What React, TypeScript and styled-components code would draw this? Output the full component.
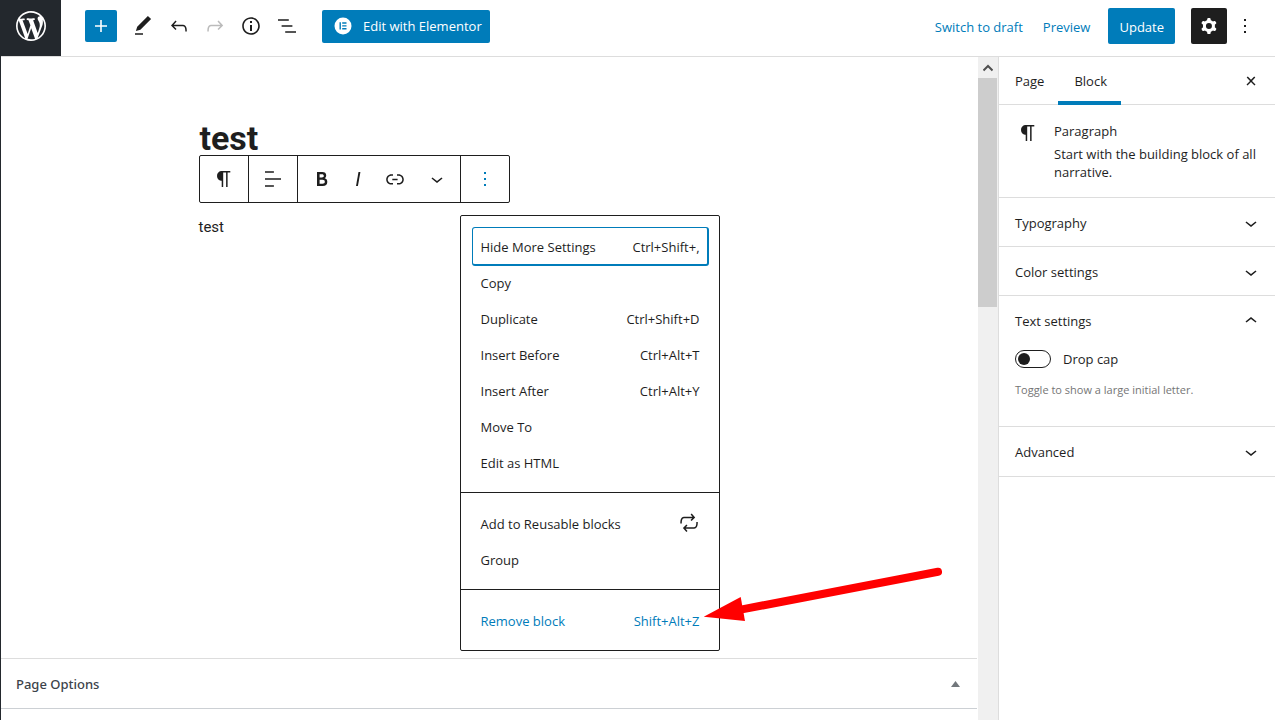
import React from "react";
import styled, { createGlobalStyle, css } from "styled-components";

const blue = "#007cba";
const ink = "#1e1e1e";
const line = "#ddd";

const GlobalStyle = createGlobalStyle`
  *, *::before, *::after { box-sizing: border-box; }
  body {
    margin: 0;
    background: #fff;
    color: ${ink};
    font: 13px/18px "Open Sans", "Noto Sans", sans-serif;
  }
  button, input { margin: 0; font: inherit; color: inherit; }
  h1, h2, h3, p, ul { margin: 0; padding: 0; }
`;

const paths = {
  plus: "M18 11.2h-5.2V6h-1.6v5.2H6v1.6h5.2V18h1.6v-5.2H18z",
  pencil: "M20.1 5.1L16.9 2 6.2 12.7l-1.3 4.4 4.5-1.3L20.1 5.1zM4 20.8h8v-1.5H4v1.5z",
  undo: "M18.3 11.7c-.6-.6-1.4-.9-2.3-.9H6.7l2.9-3.3-1.1-1-4.5 5L8.5 16l1-1-2.7-2.7H16c.5 0 .9.2 1.3.5 1 1 1 3.4 1 4.5v.3h1.5v-.2c0-1.5 0-4.3-1.5-5.7z",
  redo: "M15.6 6.5l-1.1 1 2.9 3.3H8c-.9 0-1.7.3-2.3.9-1.4 1.5-1.4 4.2-1.4 5.6v.2h1.5v-.3c0-1.1 0-3.5 1-4.5.3-.3.7-.5 1.3-.5h9.2L14.5 15l1.1 1.1 4.6-4.6-4.6-5z",
  info: "M12 3.2c-4.8 0-8.8 3.9-8.8 8.8 0 4.8 3.9 8.8 8.8 8.8 4.8 0 8.8-3.9 8.8-8.8 0-4.8-4-8.8-8.8-8.8zm0 16c-4 0-7.2-3.3-7.2-7.2C4.8 8 8 4.8 12 4.8s7.2 3.3 7.2 7.2c0 4-3.2 7.2-7.2 7.2zM11 17h2v-6h-2v6zm0-8h2V7h-2v2z",
  list: "M13.8 5.2H3v1.5h10.8V5.2zm-3.6 12v1.5H21v-1.5H10.2zm7.2-6H6.6v1.5h10.8v-1.5z",
  cog: "M10.289 4.836A1 1 0 0111.275 4h1.306a1 1 0 01.987.836l.244 1.466c.787.26 1.503.679 2.108 1.218l1.393-.522a1 1 0 011.216.437l.653 1.13a1 1 0 01-.23 1.273l-1.148.944a6.025 6.025 0 010 2.435l1.149.946a1 1 0 01.23 1.272l-.653 1.13a1 1 0 01-1.216.437l-1.394-.522c-.605.54-1.32.958-2.108 1.218l-.244 1.466a1 1 0 01-.987.836h-1.306a1 1 0 01-.986-.836l-.244-1.466a5.995 5.995 0 01-2.108-1.218l-1.394.522a1 1 0 01-1.217-.436l-.653-1.131a1 1 0 01.23-1.272l1.149-.946a6.026 6.026 0 010-2.435l-1.148-.944a1 1 0 01-.23-1.272l.653-1.131a1 1 0 011.217-.437l1.393.522a5.994 5.994 0 012.108-1.218l.244-1.466zM14.929 12a3 3 0 11-6 0 3 3 0 016 0z",
  dots: "M13 19h-2v-2h2v2zm0-6h-2v-2h2v2zm0-6h-2V5h2v2z",
  close: "M13 11.9l3.3-3.4-1.1-1-3.2 3.3-3.2-3.3-1.1 1 3.3 3.4-3.5 3.6 1 1L12 13l3.5 3.5 1-1z",
  paragraph: "M18.3 4H9.9v-.1l-.9.2c-2.3.4-4 2.4-4 4.8s1.7 4.4 4 4.8l.7.1V20h1.5V5.5h2.9V20h1.5V5.5h2.7V4z",
  align: "M4 19.8h8.9v-1.5H4v1.5zm8.9-15.6H4v1.5h8.9V4.2zm-8.9 7v1.5h16v-1.5H4z",
  bold: "M14.7 11.3c1-.6 1.5-1.6 1.5-3 0-2.3-1.3-3.4-4-3.4H7v14h5.8c1.4 0 2.5-.3 3.3-1 .8-.7 1.2-1.7 1.2-2.9.1-1.9-.8-3.1-2.6-3.7zm-5.1-4h2.3c.6 0 1.1.1 1.4.4.3.3.5.7.5 1.2s-.2 1-.5 1.2c-.3.3-.8.4-1.4.4H9.6V7.3zm4.6 9c-.4.3-1 .4-1.7.4H9.6v-3.9h2.9c.7 0 1.3.2 1.7.5.4.3.6.8.6 1.5s-.2 1.2-.6 1.5z",
  italic: "M12.5 5L10 19h1.9l2.5-14z",
  link: "M15.6 7.2H14v1.5h1.6c2 0 3.7 1.7 3.7 3.7s-1.7 3.7-3.7 3.7H14v1.5h1.6c2.8 0 5.2-2.3 5.2-5.2 0-2.9-2.3-5.2-5.2-5.2zM4.7 12.4c0-2 1.7-3.7 3.7-3.7H10V7.2H8.4c-2.9 0-5.2 2.3-5.2 5.2 0 2.9 2.3 5.2 5.2 5.2H10v-1.5H8.4c-2 0-3.7-1.7-3.7-3.7zm4.6.9h5.3v-1.5H9.3v1.5z",
  down: "M17.5 11.6L12 16l-5.5-4.4.9-1.2L12 14l4.5-3.6 1 1.2z",
  up: "M6.5 12.4L12 8l5.5 4.4-.9 1.2L12 10l-4.5 3.6-1-1.2z",
  repeat: "M7 7.2h8.2L13.5 9l1.1 1.1 3.6-3.6-3.5-4-1.1 1 1.9 2.3H7c-.9 0-1.7.3-2.3.9-1.4 1.5-1.4 4.2-1.4 5.6v.2h1.5v-.3c0-1.1 0-3.5 1-4.5.3-.3.7-.5 1.2-.5zm13.8 4V11h-1.5v.3c0 1.1 0 3.5-1 4.5-.3.3-.7.5-1.3.5H8.8l1.7-1.7-1.1-1.1L5.9 17l3.5 4 1.1-1-1.9-2.3H17c.9 0 1.7-.3 2.3-.9 1.5-1.4 1.5-4.2 1.5-5.6z",
  wordpress: "M20 10c0-5.51-4.49-10-10-10C4.48 0 0 4.49 0 10c0 5.52 4.48 10 10 10 5.51 0 10-4.48 10-10zM7.78 15.37L4.37 6.22c.55-.02 1.17-.08 1.17-.08.5-.06.44-1.13-.06-1.11 0 0-1.45.11-2.37.11-.18 0-.37 0-.58-.01C4.12 2.69 6.87 1.11 10 1.11c2.33 0 4.45.87 6.05 2.34-.68-.11-1.65.39-1.65 1.58 0 .74.45 1.36.9 2.1.35.61.55 1.36.55 2.46 0 1.49-1.4 5-1.4 5l-3.03-8.37c.54-.02.82-.17.82-.17.5-.05.44-1.25-.06-1.22 0 0-1.44.12-2.38.12-.87 0-2.33-.12-2.33-.12-.5-.03-.56 1.2-.06 1.22l.92.08 1.26 3.41zM17.41 10c.24-.64.74-1.87.43-4.25.7 1.29 1.05 2.71 1.05 4.25 0 3.29-1.73 6.24-4.4 7.78.97-2.59 1.94-5.2 2.92-7.78zM6.1 18.09C3.12 16.65 1.11 13.53 1.11 10c0-1.3.23-2.48.72-3.59C3.25 10.3 4.67 14.2 6.1 18.09zm4.03-6.63l2.58 6.98c-.86.29-1.76.45-2.71.45-.79 0-1.57-.11-2.29-.33.81-2.38 1.62-4.74 2.42-7.1z",
};

const Svg = styled.svg`
  display: block;
  flex: none;
  fill: currentColor;
`;

const Icon = ({ name, size = 24, viewBox = "0 0 24 24" }: { name: keyof typeof paths; size?: number; viewBox?: string }) => (
  <Svg width={size} height={size} viewBox={viewBox} aria-hidden="true">
    <path fillRule={name === "cog" ? "evenodd" : undefined} d={paths[name]} />
  </Svg>
);

const Page = styled.div`
  display: flex;
  flex-direction: column;
  min-height: 100vh;
  border-left: 1px solid #23282d;
`;

const Header = styled.header`
  display: flex;
  align-items: center;
  height: 57px;
  border-bottom: 1px solid ${line};
`;

const HomeLink = styled.a`
  display: flex;
  align-items: center;
  justify-content: center;
  align-self: stretch;
  width: 60px;
  padding-bottom: 4px;
  background: #23282d;
  color: #fff;
`;

const HeaderTools = styled.div`
  display: flex;
  align-items: center;
  flex: 1;
  height: 52px;
  align-self: flex-start;
  padding-left: 24px;
`;

const HeaderActions = styled.div`
  display: flex;
  align-items: center;
  height: 52px;
  align-self: flex-start;
  padding-right: 12px;
`;

const IconButton = styled.button<{ $tone?: "primary" | "dark" | "muted" | "accent"; $width?: number; $height?: number }>`
  display: flex;
  align-items: center;
  justify-content: center;
  flex: none;
  width: ${(p) => p.$width ?? 36}px;
  height: ${(p) => p.$height ?? 36}px;
  padding: 0;
  border: 0;
  border-radius: 2px;
  background: none;
  ${(p) => p.$tone === "primary" && css`background: ${blue}; color: #fff;`}
  ${(p) => p.$tone === "dark" && css`background: ${ink}; color: #fff;`}
  ${(p) => p.$tone === "muted" && css`color: #bbb;`}
  ${(p) => p.$tone === "accent" && css`color: ${blue};`}
`;

const ToolGroup = styled.div`
  display: flex;
  margin: 0 17px 0 8px;
`;

const PrimaryButton = styled.button<{ $withIcon?: boolean }>`
  display: flex;
  align-items: center;
  gap: 11px;
  height: ${(p) => (p.$withIcon ? 33 : 36)}px;
  padding: ${(p) => (p.$withIcon ? "0 8px 0 12px" : "2px 11px 0")};
  border: 0;
  border-radius: 2px;
  background: ${blue};
  color: #fff;
  white-space: nowrap;
`;

const TextButton = styled.button`
  height: 36px;
  padding: 2px 10px 0;
  border: 0;
  background: none;
  color: ${blue};
  white-space: nowrap;
`;

const ActionGap = styled.div`
  display: flex;
  align-items: center;
  gap: 16px;
  margin-left: 8px;
`;

const Body = styled.div`
  display: flex;
  flex: 1;
`;

const Main = styled.main`
  display: flex;
  flex-direction: column;
  flex: 1;
  min-width: 0;
`;

const Canvas = styled.div`
  flex: 1;
  padding: 60px 24px 0;
`;

const Column = styled.div`
  max-width: 581px;
  margin: 0 auto;
  font-family: Roboto, sans-serif;
`;

const Title = styled.h1`
  height: 38px;
  padding-left: 1px;
  font-size: 34px;
  line-height: 42px;
  font-weight: 700;
`;

const ToolbarAnchor = styled.div`
  position: relative;
  width: max-content;
  font-family: "Open Sans", "Noto Sans", sans-serif;
`;

const BlockToolbar = styled.div`
  display: flex;
  height: 48px;
  border: 1px solid ${ink};
  border-radius: 2px;
  background: #fff;
`;

const ToolbarSection = styled.div<{ $pad?: boolean }>`
  display: flex;
  align-items: center;
  padding-left: ${(p) => (p.$pad ? 6 : 0)}px;
  & + & { border-left: 1px solid ${ink}; }
`;

const Paragraph = styled.p`
  padding-top: 12px;
  font-size: 15px;
  line-height: 24px;
`;

const Menu = styled.div`
  position: absolute;
  z-index: 2;
  top: 60px;
  left: 261px;
  width: 260px;
  border: 1px solid ${ink};
  border-radius: 2px;
  background: #fff;
`;

const MenuGroup = styled.div`
  padding: 13px 10px 11px 11px;
  & + & { border-top: 1px solid ${ink}; }
`;

const MenuItem = styled.button<{ $focused?: boolean; $accent?: boolean }>`
  position: relative;
  display: flex;
  align-items: center;
  justify-content: space-between;
  width: 100%;
  height: 36px;
  padding: 0 9px;
  border: 0;
  background: none;
  color: ${(p) => (p.$accent ? blue : ink)};
  text-align: left;
  ${(p) => p.$focused && css`
    &::after {
      content: "";
      position: absolute;
      inset: -2px 0 -1px;
      border: solid ${blue};
      border-width: 1px 2px 2px 1px;
      border-radius: 3px;
    }
  `}
`;

const MenuIcon = styled.span`
  margin-right: -1px;
  padding-bottom: 2px;
`;

const Arrow = styled.svg`
  position: absolute;
  z-index: 3;
  top: 344px;
  left: 239px;
  fill: #f00;
  stroke: #f00;
  pointer-events: none;
`;

const MetaBoxes = styled.section`
  border-top: 1px solid ${line};
  padding-bottom: 11px;
`;

const MetaHeader = styled.button`
  display: flex;
  align-items: center;
  justify-content: space-between;
  width: 100%;
  height: 50px;
  padding: 0 17px 0 15px;
  border: 0;
  border-bottom: 1px solid #ccd0d4;
  background: none;
  color: #3c434a;
  font-family: "Noto Sans", sans-serif;
  font-weight: 500;
`;

const Scrollbar = styled.div`
  width: 20px;
  padding-right: 1px;
  margin-left: 1px;
  background: #f0f0f0;
`;

const ScrollArrow = styled.div`
  display: flex;
  align-items: center;
  justify-content: center;
  height: 21px;
  color: #505050;
`;

const ScrollThumb = styled.div`
  height: 229px;
  background: #cdcdcd;
`;

const Sidebar = styled.aside`
  flex: none;
  width: 277px;
  border-left: 1px solid ${line};
`;

const Tabs = styled.div`
  display: flex;
  align-items: center;
  height: 48px;
  padding-right: 12px;
  border-bottom: 1px solid ${line};
`;

const Tab = styled.button<{ $active?: boolean }>`
  height: 48px;
  padding: 0 14px 0 16px;
  border: 0;
  background: none;
  box-shadow: ${(p) => (p.$active ? `inset 0 -4px 0 ${blue}` : "none")};
`;

const Spacer = styled.div`
  flex: 1;
`;

const Card = styled.section`
  display: flex;
  gap: 14px;
  padding: 16px 16px 16px 17px;
`;

const CardText = styled.div`
  display: flex;
  flex-direction: column;
  gap: 5px;
  padding-top: 1px;
`;

const CardTitle = styled.h2`
  font-size: 13px;
  line-height: 18px;
  font-weight: 400;
`;

const Panel = styled.section<{ $last?: boolean }>`
  border-top: 1px solid ${line};
  padding-bottom: ${(p) => (p.$last ? 1 : 0)}px;
  border-bottom: ${(p) => (p.$last ? `1px solid ${line}` : "0")};
`;

const PanelHeading = styled.h2`
  font-size: 13px;
  font-weight: 400;
`;

const PanelToggle = styled.button`
  display: flex;
  align-items: center;
  justify-content: space-between;
  width: 100%;
  height: 48px;
  padding: 2px 12px 0 16px;
  border: 0;
  background: none;
  text-align: left;
`;

const PanelBody = styled.div`
  padding: 6px 16px 27px;
`;

const SwitchRow = styled.label`
  display: flex;
  align-items: center;
  gap: 12px;
`;

const Switch = styled.input`
  appearance: none;
  width: 36px;
  height: 18px;
  border: 1px solid ${ink};
  border-radius: 9px;
  background: #fff;
  &::before {
    content: "";
    display: block;
    width: 12px;
    height: 12px;
    margin: 2px;
    border-radius: 50%;
    background: ${ink};
  }
`;

const Help = styled.p`
  margin-top: 13px;
  color: #757575;
  font-size: 11px;
  line-height: 18px;
`;

const groups: { label: string; keys?: string; icon?: boolean; focused?: boolean; accent?: boolean }[][] = [
  [
    { label: "Hide More Settings", keys: "Ctrl+Shift+,", focused: true },
    { label: "Copy" },
    { label: "Duplicate", keys: "Ctrl+Shift+D" },
    { label: "Insert Before", keys: "Ctrl+Alt+T" },
    { label: "Insert After", keys: "Ctrl+Alt+Y" },
    { label: "Move To" },
    { label: "Edit as HTML" },
  ],
  [{ label: "Add to Reusable blocks", icon: true }, { label: "Group" }],
  [{ label: "Remove block", keys: "Shift+Alt+Z", accent: true }],
];

const PanelHead = ({ title, open }: { title: string; open?: boolean }) => (
  <PanelHeading>
    <PanelToggle aria-expanded={!!open}>
      {title}
      <Icon name={open ? "up" : "down"} />
    </PanelToggle>
  </PanelHeading>
);

export default function App() {
  return (
    <Page>
      <GlobalStyle />
      <Header>
        <HomeLink href="#" aria-label="View pages">
          <Icon name="wordpress" size={36} viewBox="-2 -2 24 24" />
        </HomeLink>
        <HeaderTools>
          <IconButton $tone="primary" $width={32} $height={32} aria-label="Add block"><Icon name="plus" /></IconButton>
          <ToolGroup>
            <IconButton aria-label="Tools"><Icon name="pencil" /></IconButton>
            <IconButton aria-label="Undo"><Icon name="undo" /></IconButton>
            <IconButton $tone="muted" aria-label="Redo"><Icon name="redo" /></IconButton>
            <IconButton aria-label="Details"><Icon name="info" /></IconButton>
            <IconButton aria-label="List view"><Icon name="list" /></IconButton>
          </ToolGroup>
          <PrimaryButton $withIcon>
            <Svg width="18" height="18" viewBox="0 0 18 18" aria-hidden="true">
              <circle cx="9" cy="9" r="8.5" />
              <path fill={blue} d="M5.5 5.3h1.4v7.2H5.5zM8.2 5.3h4.3v1.4H8.2zM8.2 8.2h4.3v1.4H8.2zM8.2 11.1h4.3v1.4H8.2z" />
            </Svg>
            Edit with Elementor
          </PrimaryButton>
        </HeaderTools>
        <HeaderActions>
          <TextButton>Switch to draft</TextButton>
          <TextButton>Preview</TextButton>
          <ActionGap>
            <PrimaryButton>Update</PrimaryButton>
            <IconButton $tone="dark" aria-label="Settings"><Icon name="cog" /></IconButton>
          </ActionGap>
          <IconButton aria-label="Options"><Icon name="dots" /></IconButton>
        </HeaderActions>
      </Header>

      <Body>
        <Main>
          <Canvas>
            <Column>
              <Title>test</Title>
              <ToolbarAnchor>
                <BlockToolbar role="toolbar" aria-label="Block tools">
                  <ToolbarSection>
                    <IconButton $width={48} aria-label="Paragraph"><Icon name="paragraph" /></IconButton>
                  </ToolbarSection>
                  <ToolbarSection>
                    <IconButton $width={48} aria-label="Align"><Icon name="align" /></IconButton>
                  </ToolbarSection>
                  <ToolbarSection $pad>
                    <IconButton aria-label="Bold"><Icon name="bold" /></IconButton>
                    <IconButton aria-label="Italic"><Icon name="italic" /></IconButton>
                    <IconButton $width={38} aria-label="Link"><Icon name="link" /></IconButton>
                    <IconButton $width={46} aria-label="More"><Icon name="down" /></IconButton>
                  </ToolbarSection>
                  <ToolbarSection>
                    <IconButton $tone="accent" $width={48} aria-label="More settings"><Icon name="dots" /></IconButton>
                  </ToolbarSection>
                </BlockToolbar>
                <Menu role="menu">
                  {groups.map((items, i) => (
                    <MenuGroup key={i} role="group">
                      {items.map((item) => (
                        <MenuItem key={item.label} role="menuitem" $focused={item.focused} $accent={item.accent}>
                          <span>{item.label}</span>
                          {item.keys && <span>{item.keys}</span>}
                          {item.icon && <MenuIcon><Icon name="repeat" /></MenuIcon>}
                        </MenuItem>
                      ))}
                    </MenuGroup>
                  ))}
                  <Arrow width="250" height="70" viewBox="700 560 250 70" aria-hidden="true">
                    <path d="M742 609.400L938 571.700" strokeWidth="8" strokeLinecap="round" />
                    <path d="M703.700 616.700L740.700 597L745 621z" stroke="none" />
                  </Arrow>
                </Menu>
              </ToolbarAnchor>
              <Paragraph>test</Paragraph>
            </Column>
          </Canvas>
          <MetaBoxes>
            <MetaHeader>
              Page Options
              <Svg width="9" height="6" viewBox="0 0 9 6" color="#72777c" aria-hidden="true"><path d="M4.500 0L9 6H0z" /></Svg>
            </MetaHeader>
          </MetaBoxes>
        </Main>

        <Scrollbar>
          <ScrollArrow>
            <Svg width="10" height="8" viewBox="0 0 10 8" aria-hidden="true">
              <path d="M.5 6.500L5 2l4.500 4.500" fill="none" stroke="currentColor" strokeWidth="2" />
            </Svg>
          </ScrollArrow>
          <ScrollThumb />
        </Scrollbar>

        <Sidebar>
          <Tabs>
            <Tab>Page</Tab>
            <Tab $active>Block</Tab>
            <Spacer />
            <IconButton $width={24} $height={24} aria-label="Close settings"><Icon name="close" /></IconButton>
          </Tabs>
          <Card>
            <Icon name="paragraph" />
            <CardText>
              <CardTitle>Paragraph</CardTitle>
              <p>Start with the building block of all narrative.</p>
            </CardText>
          </Card>
          <Panel><PanelHead title="Typography" /></Panel>
          <Panel><PanelHead title="Color settings" /></Panel>
          <Panel>
            <PanelHead title="Text settings" open />
            <PanelBody>
              <SwitchRow>
                <Switch type="checkbox" role="switch" />
                Drop cap
              </SwitchRow>
              <Help>Toggle to show a large initial letter.</Help>
            </PanelBody>
          </Panel>
          <Panel $last><PanelHead title="Advanced" /></Panel>
        </Sidebar>
      </Body>
    </Page>
  );
}
